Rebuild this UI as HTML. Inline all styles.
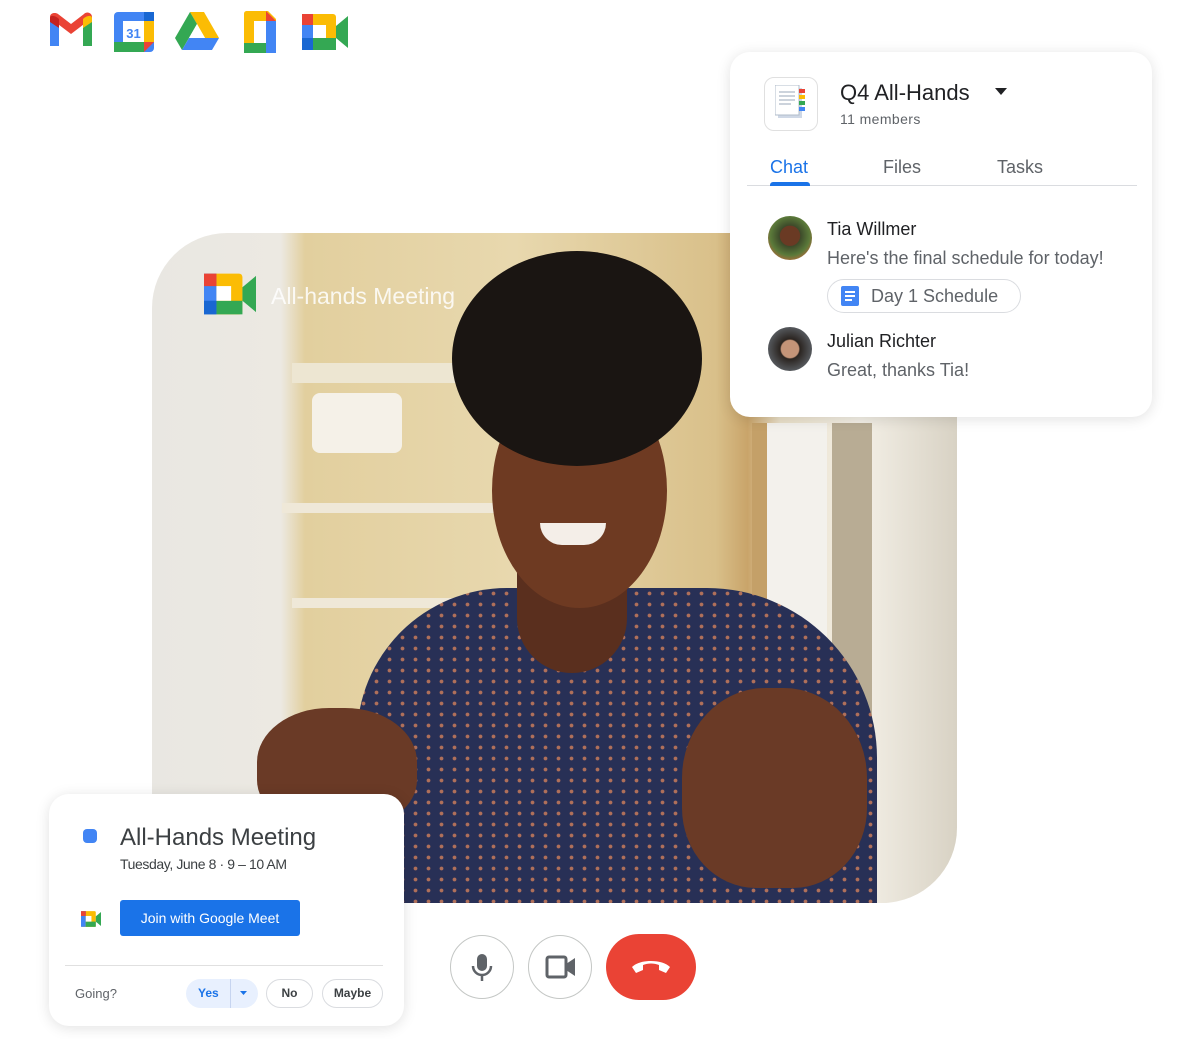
<!DOCTYPE html>
<html><head><meta charset="utf-8"><style>
*{margin:0;padding:0;box-sizing:border-box}
body{width:1200px;height:1039px;background:#fff;position:relative;overflow:hidden;font-family:"Liberation Sans",Arial,sans-serif;color:#3c4043}
.abs{position:absolute}
.photo{left:152px;top:233px;width:805px;height:670px;border-radius:75px 0 75px 0;overflow:hidden;background:linear-gradient(90deg,#e9e7e2 0,#ece9e2 16%,#e2cf9e 19%,#e8d8ae 45%,#d9c08a 70%,#c9a46a 74%,#e9dfc8 78%,#f3efe6 88%,#d8d2c4 100%)}
.card{background:#fff;border-radius:20px;box-shadow:0 2px 14px rgba(0,0,0,.12)}
.tab{position:absolute;top:157px;font-size:18px;color:#5f6368}
.name{font-size:18px;color:#202124}
.msg{font-size:18px;color:#5f6368}
.cbtn{position:absolute;top:935px;width:64px;height:64px;border-radius:50%;border:1.5px solid #c4c7c5;background:#fff}
.pill{position:absolute;top:979px;height:29px;border:1px solid #dadce0;border-radius:15px;font-size:12px;font-weight:bold;color:#3c4043;text-align:center;line-height:27px}
.dots{background-image:radial-gradient(circle,#b0705a 1.6px,transparent 2.2px);background-size:13px 11px}
</style></head><body>

<svg class="abs" style="left:48px;top:12px" width="46" height="38" viewBox="0 0 46 38"><path d="M2 6v28h9V16z" fill="#4285f4"/><path d="M35 16v18h9V6z" fill="#34a853"/><path d="M2 6l21 16L44 6v-1c0-4-5-6-8-3L23 12 10 2C7 0 2 1 2 5z" fill="#ea4335"/><path d="M35 7v9l9-6V6c0-3-5-3-9 1z" fill="#fbbc04"/><path d="M2 6v4l9 6V7C7 3 2 3 2 6z" fill="#c5221f"/></svg>
<svg class="abs" style="left:114px;top:12px" width="40" height="40" viewBox="0 0 40 40"><rect width="40" height="40" rx="4" fill="#4285f4"/><rect x="30" y="0" width="10" height="30" fill="#1967d2"/><rect x="30" y="9" width="10" height="21" fill="#fbbc04"/><rect x="0" y="30" width="30" height="10" fill="#34a853"/><path d="M30 30h10l-10 10z" fill="#ea4335"/><rect x="9" y="9" width="21" height="21" fill="#fff"/><text x="19.5" y="26" font-size="13" font-weight="bold" fill="#4285f4" text-anchor="middle" font-family="Liberation Sans">31</text></svg>
<svg class="abs" style="left:175px;top:12px" width="44" height="38" viewBox="0 0 44 38"><path d="M15 0h14l15 26h-14z" fill="#fbbc04"/><path d="M15 0L0 26l7 12 15-26z" fill="#34a853"/><path d="M7 38h30l7-12H14z" fill="#4285f4"/><path d="M22 12l8 14h-16z" fill="#fff"/></svg>
<svg class="abs" style="left:244px;top:11px" width="32" height="42" viewBox="0 0 32 42"><path d="M0 3c0-2 1-3 3-3h21l8 8v31c0 2-1 3-3 3H3c-2 0-3-1-3-3z" fill="#fbbc04"/><path d="M22 0l10 10H22z" fill="#ea4335"/><rect x="22" y="10" width="10" height="32" fill="#4285f4"/><rect x="0" y="32" width="22" height="10" fill="#34a853"/><rect x="10" y="10" width="12" height="22" fill="#fff"/></svg>
<svg class="abs" style="left:302px;top:14px" width="46" height="36" viewBox="0 0 46 36"><rect x="0" y="0" width="34" height="36" rx="3" fill="#fbbc04"/><rect x="0" y="0" width="11" height="36" fill="#4285f4"/><rect x="11" y="24" width="23" height="12" fill="#34a853"/><rect x="0" y="24" width="11" height="12" fill="#1967d2"/><path d="M0 0h11v11H0z" fill="#ea4335"/><path d="M34 12l12-10v32L34 24z" fill="#34a853"/><rect x="11" y="11" width="13" height="13" fill="#fff"/></svg>

<div class="abs photo">
  <div class="abs" style="left:140px;top:130px;width:380px;height:20px;background:#ede6d2"></div>
  <div class="abs" style="left:160px;top:160px;width:90px;height:60px;background:#f5f1e8;border-radius:8px"></div>
  <div class="abs" style="left:130px;top:270px;width:260px;height:10px;background:#efe8d8"></div>
  <div class="abs" style="left:140px;top:365px;width:260px;height:10px;background:#efe8d8"></div>
  <div class="abs" style="left:600px;top:190px;width:30px;height:480px;background:#c4a068"></div>
  <div class="abs" style="left:615px;top:190px;width:60px;height:480px;background:#f3f1ec"></div>
  <div class="abs" style="left:680px;top:190px;width:40px;height:480px;background:#b8ac94"></div>
  <!-- shirt -->
  <div class="abs dots" style="left:205px;top:355px;width:520px;height:380px;border-radius:150px 170px 0 0;background-color:#283056"></div>
  <!-- neck -->
  <div class="abs" style="left:365px;top:340px;width:110px;height:100px;background:#5a2f1e;border-radius:0 0 55px 55px"></div>
  <!-- face -->
  <div class="abs" style="left:340px;top:140px;width:175px;height:235px;border-radius:50%;background:#6e3a22"></div>
  <div class="abs" style="left:388px;top:290px;width:66px;height:22px;border-radius:0 0 33px 33px;background:#f4eee8"></div>
  <!-- hair -->
  <div class="abs" style="left:300px;top:18px;width:250px;height:215px;border-radius:50%;background:#1a1512"></div>
  <!-- hands -->
  <div class="abs" style="left:105px;top:475px;width:160px;height:120px;border-radius:45% 45% 40% 40%;background:#6a3a26"></div>
  <div class="abs" style="left:530px;top:455px;width:185px;height:200px;border-radius:45% 45% 40% 40%;background:#6a3a26"></div>
  <svg class="abs" style="left:52px;top:40px" width="52" height="42" viewBox="0 0 46 36"><rect x="0" y="0" width="34" height="36" rx="3" fill="#fbbc04"/><rect x="0" y="0" width="11" height="36" fill="#4285f4"/><rect x="11" y="24" width="23" height="12" fill="#34a853"/><rect x="0" y="24" width="11" height="12" fill="#1967d2"/><path d="M0 0h11v11H0z" fill="#ea4335"/><path d="M34 12l12-10v32L34 24z" fill="#34a853"/><rect x="11" y="11" width="13" height="13" fill="#fff"/></svg>
  <div class="abs" style="left:119px;top:50px;font-size:23px;color:#fff;opacity:.85">All-hands Meeting</div>
</div>

<div class="abs card" style="left:730px;top:52px;width:422px;height:365px"></div>
<div class="abs" style="left:764px;top:77px;width:54px;height:54px;border:1px solid #e0e0e0;border-radius:10px;background:#fff"></div>
<svg class="abs" style="left:775px;top:85px" width="34" height="38" viewBox="0 0 34 38"><rect x="3" y="3" width="24" height="30" fill="#cfd8e6"/><rect x="0" y="0" width="24" height="30" fill="#fff" stroke="#b0bccb"/><path d="M4 7h16M4 11h16M4 15h16M4 19h12" stroke="#9aa7b8"/><rect x="24" y="4" width="6" height="4" fill="#ea4335"/><rect x="24" y="10" width="6" height="4" fill="#fbbc04"/><rect x="24" y="16" width="6" height="4" fill="#34a853"/><rect x="24" y="22" width="6" height="4" fill="#4285f4"/></svg>
<div class="abs" style="left:840px;top:80px;font-size:22px;color:#202124">Q4 All-Hands</div>
<svg class="abs" style="left:995px;top:88px" width="12" height="8"><path d="M0 0h12L6 7z" fill="#202124"/></svg>
<div class="abs" style="left:840px;top:111px;font-size:14px;color:#5f6368;letter-spacing:.4px">11 members</div>
<div class="tab" style="left:770px;color:#1a73e8">Chat</div>
<div class="tab" style="left:883px">Files</div>
<div class="tab" style="left:997px">Tasks</div>
<div class="abs" style="left:747px;top:185px;width:390px;height:1px;background:#dadce0"></div>
<div class="abs" style="left:770px;top:182px;width:40px;height:4px;border-radius:3px 3px 0 0;background:#1a73e8"></div>
<div class="abs" style="left:768px;top:216px;width:44px;height:44px;border-radius:50%;background:radial-gradient(circle at 50% 45%,#6a3a24 0 30%,#3d4a2a 32%,#5b7a3a 60%,#e0623a 90%)"></div>
<div class="abs name" style="left:827px;top:219px">Tia Willmer</div>
<div class="abs msg" style="left:827px;top:248px">Here's the final schedule for today!</div>
<div class="abs" style="left:827px;top:279px;width:194px;height:34px;border:1px solid #dadce0;border-radius:17px"></div>
<svg class="abs" style="left:841px;top:286px" width="18" height="20"><rect width="18" height="20" rx="2" fill="#4285f4"/><path d="M4 6h10M4 10h10M4 14h7" stroke="#fff" stroke-width="2"/></svg>
<div class="abs msg" style="left:871px;top:286px;color:#5f6368">Day 1 Schedule</div>
<div class="abs" style="left:768px;top:327px;width:44px;height:44px;border-radius:50%;background:radial-gradient(circle at 50% 50%,#c49478 0 28%,#2a2420 32%,#55585c 70%)"></div>
<div class="abs name" style="left:827px;top:331px">Julian Richter</div>
<div class="abs msg" style="left:827px;top:360px">Great, thanks Tia!</div>

<div class="abs card" style="left:49px;top:794px;width:355px;height:232px"></div>
<div class="abs" style="left:83px;top:829px;width:14px;height:14px;border-radius:4px;background:#4285f4"></div>
<div class="abs" style="left:120px;top:824px;font-size:24px;color:#3c4043">All-Hands Meeting</div>
<div class="abs" style="left:120px;top:856px;font-size:14px;color:#3c4043;letter-spacing:-.4px">Tuesday, June 8 · 9 – 10 AM</div>
<svg class="abs" style="left:81px;top:911px" width="20" height="16" viewBox="0 0 46 36"><rect x="0" y="0" width="34" height="36" rx="3" fill="#fbbc04"/><rect x="0" y="0" width="11" height="36" fill="#4285f4"/><rect x="11" y="24" width="23" height="12" fill="#34a853"/><path d="M0 0h11v11H0z" fill="#ea4335"/><path d="M34 12l12-10v32L34 24z" fill="#34a853"/><rect x="11" y="11" width="13" height="13" fill="#fff"/></svg>
<div class="abs" style="left:120px;top:900px;width:180px;height:36px;background:#1a73e8;border-radius:3px;color:#fff;font-size:14px;text-align:center;line-height:36px">Join with Google Meet</div>
<div class="abs" style="left:65px;top:965px;width:318px;height:1px;background:#e0e0e0"></div>
<div class="abs" style="left:75px;top:986px;font-size:13px;color:#5f6368">Going?</div>
<div class="abs" style="left:186px;top:979px;width:72px;height:29px;border-radius:15px;background:#e8f0fe"></div>
<div class="abs" style="left:230px;top:979px;width:1px;height:29px;background:#c6d4f0"></div>
<div class="abs" style="left:198px;top:986px;font-size:12px;font-weight:bold;color:#1a73e8">Yes</div>
<svg class="abs" style="left:240px;top:991px" width="7" height="4"><path d="M0 0h7L3.5 4z" fill="#1a73e8"/></svg>
<div class="pill" style="left:266px;width:47px">No</div>
<div class="pill" style="left:322px;width:61px">Maybe</div>

<div class="cbtn" style="left:450px"></div>
<svg class="abs" style="left:470px;top:953px" width="24" height="30" viewBox="0 0 24 30"><rect x="7" y="1" width="10" height="17" rx="5" fill="#5f6368"/><path d="M3 13c0 5 4 9 9 9s9-4 9-9" stroke="#5f6368" stroke-width="2.5" fill="none"/><path d="M12 22v6" stroke="#5f6368" stroke-width="2.5"/></svg>
<div class="cbtn" style="left:528px"></div>
<svg class="abs" style="left:545px;top:955px" width="32" height="24" viewBox="0 0 32 24"><rect x="2" y="2" width="19" height="20" rx="2" stroke="#5f6368" stroke-width="3" fill="none"/><path d="M21 9l9-6v18l-9-6z" fill="#5f6368"/></svg>
<div class="abs" style="left:606px;top:934px;width:90px;height:66px;border-radius:33px;background:#ea4335"></div>
<svg class="abs" style="left:630px;top:958px" width="42" height="18" viewBox="0 0 42 18"><path d="M21 3C13 3 6 5 2 9l4 6 7-3V7c5-2 11-2 16 0v5l7 3 4-6C36 5 29 3 21 3z" fill="#fff"/></svg>

</body></html>
